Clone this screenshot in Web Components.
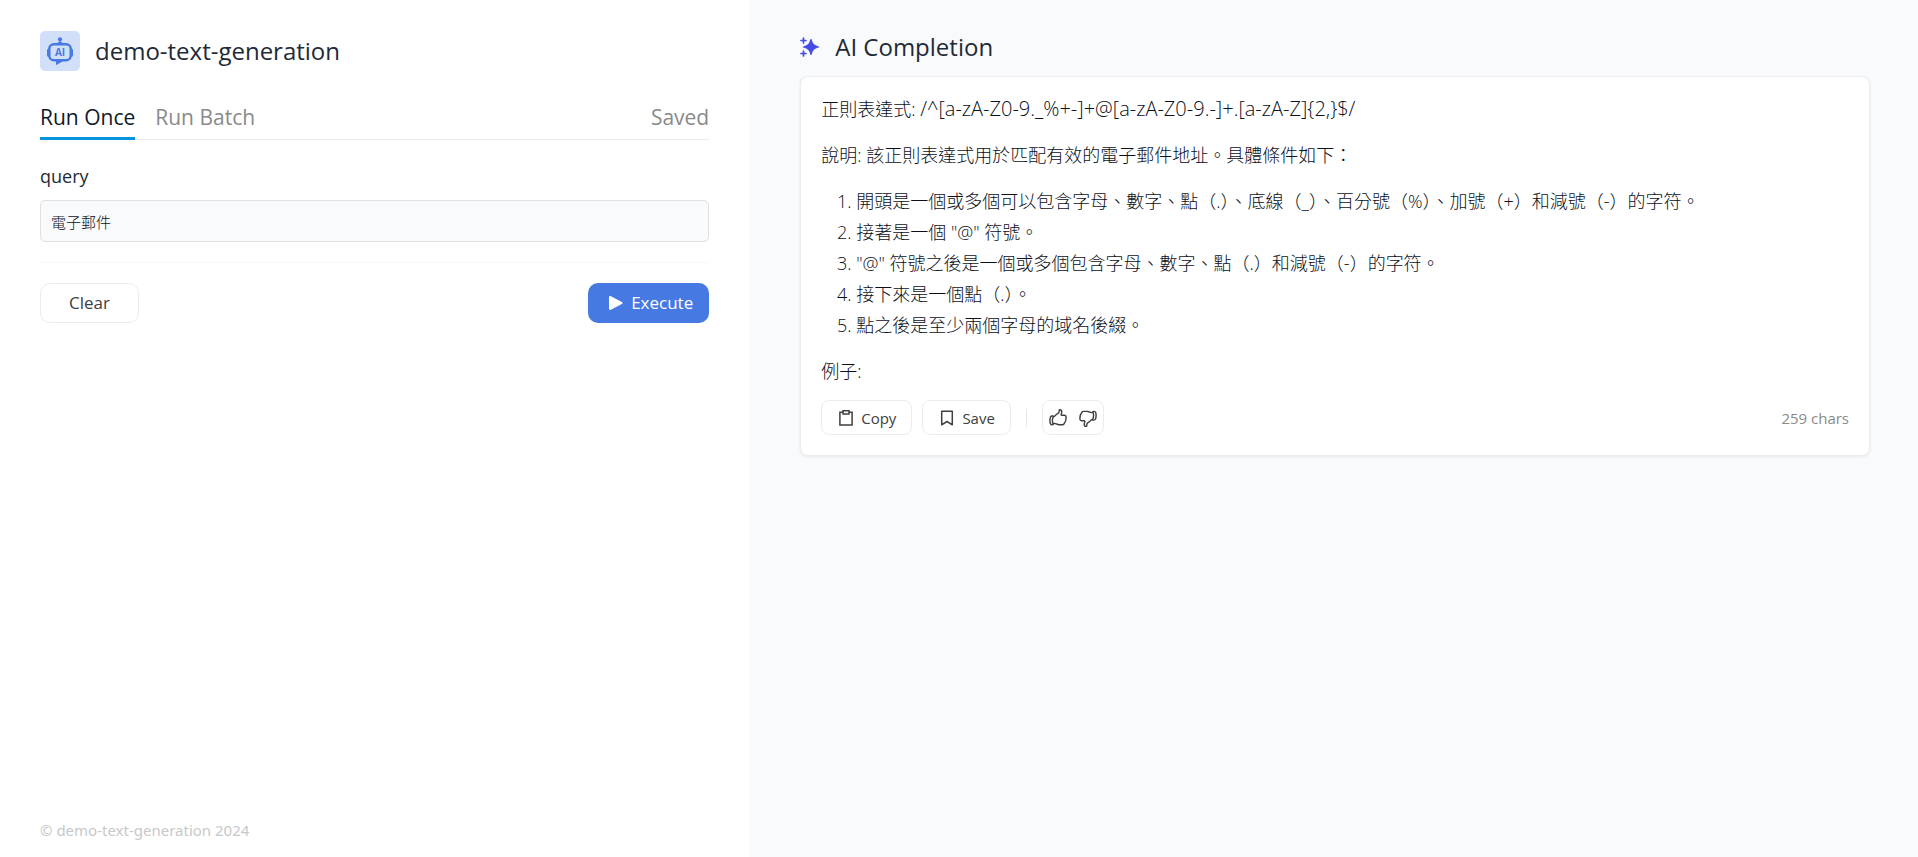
<!DOCTYPE html>
<html lang="zh-Hant">
<head>
<meta charset="utf-8">
<meta name="viewport" content="width=device-width, initial-scale=1">
<title>demo-text-generation</title>
<style>
  body {
    margin: 0;
    font-family: "Open Sans", "Noto Sans CJK TC", sans-serif;
    color: #1f2a37;
    background: #fff;
    --accent: #4779e2;
    --line: #ececee;
    --muted: #8a8a8a;
    --surface: #f9fafc;
  }
</style>
</head>
<body>
<app-shell>
  <app-title slot="side">demo-text-generation</app-title>
  <run-tabs slot="side"></run-tabs>
  <query-form slot="side"></query-form>
  <copyright-note slot="foot">© demo-text-generation 2024</copyright-note>
  <section-title slot="main">AI Completion</section-title>
  <result-card slot="main" count="259">
    <result-text></result-text>
  </result-card>
</app-shell>

<script>
const define = (name, html) => {
  const tpl = document.createElement('template');
  tpl.innerHTML = html;
  customElements.define(name, class extends HTMLElement {
    constructor() {
      super();
      this.attachShadow({ mode: 'open' }).append(tpl.content.cloneNode(true));
    }
    connectedCallback() {
      const out = this.shadowRoot.querySelector('[data-count]');
      if (out) out.textContent = `${this.getAttribute('count')} chars`;
    }
  });
};

// Two-pane page frame
define('app-shell', `
<style>
  :host { display: grid; grid-template-columns: 25fr 39fr; min-height: 100vh; }
  aside { display: flex; flex-direction: column; padding: 31px 40px 17px; box-sizing: border-box; min-width: 0; }
  .foot { margin-top: auto; }
  main { background: var(--surface); padding: 31px 48px 31px 51px; min-width: 0; }
</style>
<aside><slot name="side"></slot><div class="foot"><slot name="foot"></slot></div></aside>
<main><slot name="main"></slot></main>`);

define('app-title', `
<style>
  :host { display: flex; align-items: center; gap: 15px; }
  svg { flex: none; border-radius: 5px; background: #d1dff9; }
  h1 { margin: 0; font-size: 24px; line-height: 40px; font-weight: 400; }
  text { font: 700 10px "Open Sans", sans-serif; }
</style>
<svg width="40" height="40" viewBox="0 0 40 40" fill="#4779e2" aria-hidden="true">
  <circle cx="20" cy="8.300" r="2.100"/>
  <path d="M19.200 9h1.600v2.300h1.700v1.700h-5v-1.700h1.700z"/>
  <rect x="9.300" y="13.200" width="21.400" height="16" rx="4.500" fill="none" stroke="#4779e2" stroke-width="2.400"/>
  <path d="M8.700 17.500v8.500a1.700 1.700 0 0 1-1.700-1.700v-5.100A1.700 1.700 0 0 1 8.700 17.500zM31.300 17.500v8.500a1.700 1.700 0 0 0 1.700-1.700v-5.100A1.700 1.700 0 0 0 31.300 17.500z"/>
  <path d="M16 29h9l-8.200 4.800q-.8.300-.8-.5z"/>
  <text x="20" y="25" text-anchor="middle">AI</text>
</svg>
<h1><slot></slot></h1>`);

define('run-tabs', `
<style>
  :host { display: flex; align-items: stretch; gap: 20px; height: 45px; margin-top: 23px; border-bottom: 1px solid #e9eaec; }
  button { font: inherit; font-size: 21px; line-height: 28px; padding: 8px 0 6px; margin: 0 0 -1px; border: 0; border-bottom: 3px solid transparent; background: none; color: var(--muted); cursor: pointer; }
  button[aria-selected=true] { color: #111827; border-color: #0693d9; }
  .end { margin-left: auto; }
</style>
<button role="tab" aria-selected="true">Run Once</button>
<button role="tab" aria-selected="false">Run Batch</button>
<button role="tab" aria-selected="false" class="end">Saved</button>`);

define('query-form', `
<style>
  :host { display: block; margin-top: 22px; }
  form { display: flex; flex-direction: column; }
  label { font-size: 18px; line-height: 28px; font-weight: 400; }
  input { font: inherit; font-size: 15px; font-weight: 300; color: #0b0f1a; height: 42px; margin-top: 10px; padding: 0 10px; box-sizing: border-box; width: 100%; border: 1px solid #dfe0e2; border-radius: 5px; background: var(--surface); outline: 0; }
  .row { display: flex; justify-content: space-between; margin-top: 20px; padding-top: 20px; border-top: 1px solid #f6f7f8; }
  button { font: inherit; font-size: 17px; line-height: 24px; height: 40px; display: flex; align-items: center; gap: 8px; border-radius: 10px; box-sizing: border-box; cursor: pointer; }
  .clear { padding: 0 28px; border: 1px solid var(--line); background: #fff; color: #404040; }
  .go { padding: 0 16px 0 20px; border: 0; background: var(--accent); color: #fff; }
</style>
<form onsubmit="return false">
  <label for="q">query</label>
  <input id="q" type="text" value="電子郵件">
  <div class="row">
    <button type="reset" class="clear">Clear</button>
    <button type="submit" class="go"><svg width="15" height="16" viewBox="0 0 15 16" fill="#fff" aria-hidden="true"><path d="M1 2.200C1 1.200 2 .7 2.900 1.200l11 5.800c.9.500.9 1.500 0 2l-11 5.800C2 15.300 1 14.800 1 13.800z"/></svg>Execute</button>
  </div>
</form>`);

define('copyright-note', `
<style>:host { display: block; font-family: "Noto Sans", sans-serif; font-size: 15px; line-height: 20px; color: #c8c8c8; }</style>
<slot></slot>`);

define('section-title', `
<style>
  :host { display: flex; align-items: center; gap: 15px; margin-bottom: 14px; }
  h2 { margin: 0; font-size: 24px; line-height: 31px; font-weight: 400; }
</style>
<svg width="20" height="20" viewBox="0 0 20 20" fill="#444ce7" aria-hidden="true">
  <path d="M11 2.500c1.100 4.500 2.600 6.100 7.500 7.500-4.900 1.400-6.400 3-7.500 7.500-1.100-4.500-2.600-6.100-7.500-7.500 4.900-1.400 6.400-3 7.500-7.500z" stroke="#444ce7" stroke-width="1.200" stroke-linejoin="round"/>
  <path d="M3.500 1v5M1 3.500h5M3.500 14v5M1 16.500h5" stroke="#444ce7" stroke-width="1.700" stroke-linecap="round"/>
</svg>
<h2><slot></slot></h2>`);

define('result-text', `
<style>
  :host { display: block; font-size: 18px; line-height: 31px; color: #0b0f1a; font-weight: 300; }
  p { margin: 0 0 15px; }
  ol { margin: 0 0 15px; padding-left: 35px; }
  p:last-child { margin: 0; }
  .rx { font-size: 20px; line-height: 20px; }
</style>
<p>正則表達式: <span class="rx">/^[a-zA-Z0-9._%+-]+@[a-zA-Z0-9.-]+.[a-zA-Z]{2,}$/</span></p>
<p>說明: 該正則表達式用於匹配有效的電子郵件地址。具體條件如下：</p>
<ol>
  <li>開頭是一個或多個可以包含字母、數字、點（.）、底線（_）、百分號（%）、加號（+）和減號（-）的字符。</li>
  <li>接著是一個 "@" 符號。</li>
  <li>"@" 符號之後是一個或多個包含字母、數字、點（.）和減號（-）的字符。</li>
  <li>接下來是一個點（.）。</li>
  <li>點之後是至少兩個字母的域名後綴。</li>
</ol>
<p>例子:</p>`);

define('result-card', `
<style>
  :host { display: block; padding: 17px 20px 20px; border: 1px solid var(--line); border-radius: 8px; background: #fff; box-shadow: 0 1px 3px rgba(16,24,40,.08); }
  .bar { display: flex; align-items: center; gap: 10px; margin-top: 13px; }
  button { font: inherit; font-size: 15px; line-height: 20px; color: #404040; display: flex; align-items: center; gap: 6px; background: none; border: 0; padding: 0; cursor: pointer; }
  .box { height: 35px; padding: 0 15px; border: 1px solid var(--line); border-radius: 8px; box-sizing: border-box; }
  .votes { display: flex; align-items: center; gap: 10px; padding: 0 5px; }
  i { width: 1px; height: 18px; margin: 0 5px; background: #e5e7eb; }
  .n { margin-left: auto; font-size: 15px; line-height: 20px; color: var(--muted); }
  svg { fill: none; stroke: #404040; flex: none; }
</style>
<slot></slot>
<div class="bar">
  <button class="box"><svg width="18" height="18" viewBox="0 0 18 18" stroke-width="1.500" aria-hidden="true"><path d="M6 3.200H2.900v12.700h12.200V3.200H12M6 1.800h6v3.100H6z"/></svg>Copy</button>
  <button class="box"><svg width="18" height="18" viewBox="0 0 18 18" stroke-width="1.500" stroke-linejoin="round" aria-hidden="true"><path d="M3.700 2.200h10.600v13.600L9 12.500l-5.300 3.300z"/></svg>Save</button>
  <i></i>
  <div class="box votes">
    <button aria-label="Like"><svg width="20" height="20" viewBox="0 0 24 24" stroke-width="1.700" stroke-linecap="round" stroke-linejoin="round" aria-hidden="true"><path d="M6.633 10.250c.806 0 1.533-.446 2.031-1.080a9.041 9.041 0 0 1 2.861-2.400c.723-.384 1.350-.956 1.653-1.715a4.498 4.498 0 0 0 .322-1.672V2.750a.75.75 0 0 1 .75-.75 2.250 2.250 0 0 1 2.250 2.250c0 1.152-.26 2.243-.723 3.218-.266.558.107 1.282.725 1.282h3.126c1.026 0 1.945.694 2.054 1.715.045.422.068.85.068 1.285a11.950 11.950 0 0 1-2.649 7.521c-.388.482-.987.729-1.605.729H13.480c-.483 0-.964-.078-1.423-.23l-3.114-1.040a4.501 4.501 0 0 0-1.423-.23H5.904M5.904 18.500c.083.205.173.405.27.602.197.4-.078.898-.523.898h-.908c-.889 0-1.713-.518-1.972-1.368a12 12 0 0 1-.521-3.507c0-1.553.295-3.036.831-4.398C3.387 9.953 4.167 9.500 5 9.500h1.053c.472 0 .745.556.5.96a8.958 8.958 0 0 0-1.302 4.665c0 1.194.232 2.333.654 3.375z"/></svg></button>
    <button aria-label="Dislike"><svg width="20" height="20" viewBox="0 0 24 24" stroke-width="1.700" stroke-linecap="round" stroke-linejoin="round" aria-hidden="true"><path transform="rotate(180 12 12)" d="M6.633 10.250c.806 0 1.533-.446 2.031-1.080a9.041 9.041 0 0 1 2.861-2.400c.723-.384 1.350-.956 1.653-1.715a4.498 4.498 0 0 0 .322-1.672V2.750a.75.75 0 0 1 .75-.75 2.250 2.250 0 0 1 2.250 2.250c0 1.152-.26 2.243-.723 3.218-.266.558.107 1.282.725 1.282h3.126c1.026 0 1.945.694 2.054 1.715.045.422.068.85.068 1.285a11.950 11.950 0 0 1-2.649 7.521c-.388.482-.987.729-1.605.729H13.480c-.483 0-.964-.078-1.423-.23l-3.114-1.040a4.501 4.501 0 0 0-1.423-.23H5.904M5.904 18.500c.083.205.173.405.27.602.197.4-.078.898-.523.898h-.908c-.889 0-1.713-.518-1.972-1.368a12 12 0 0 1-.521-3.507c0-1.553.295-3.036.831-4.398C3.387 9.953 4.167 9.500 5 9.500h1.053c.472 0 .745.556.5.96a8.958 8.958 0 0 0-1.302 4.665c0 1.194.232 2.333.654 3.375z"/></svg></button>
  </div>
  <span class="n" data-count></span>
</div>`);
</script>
</body>
</html>
